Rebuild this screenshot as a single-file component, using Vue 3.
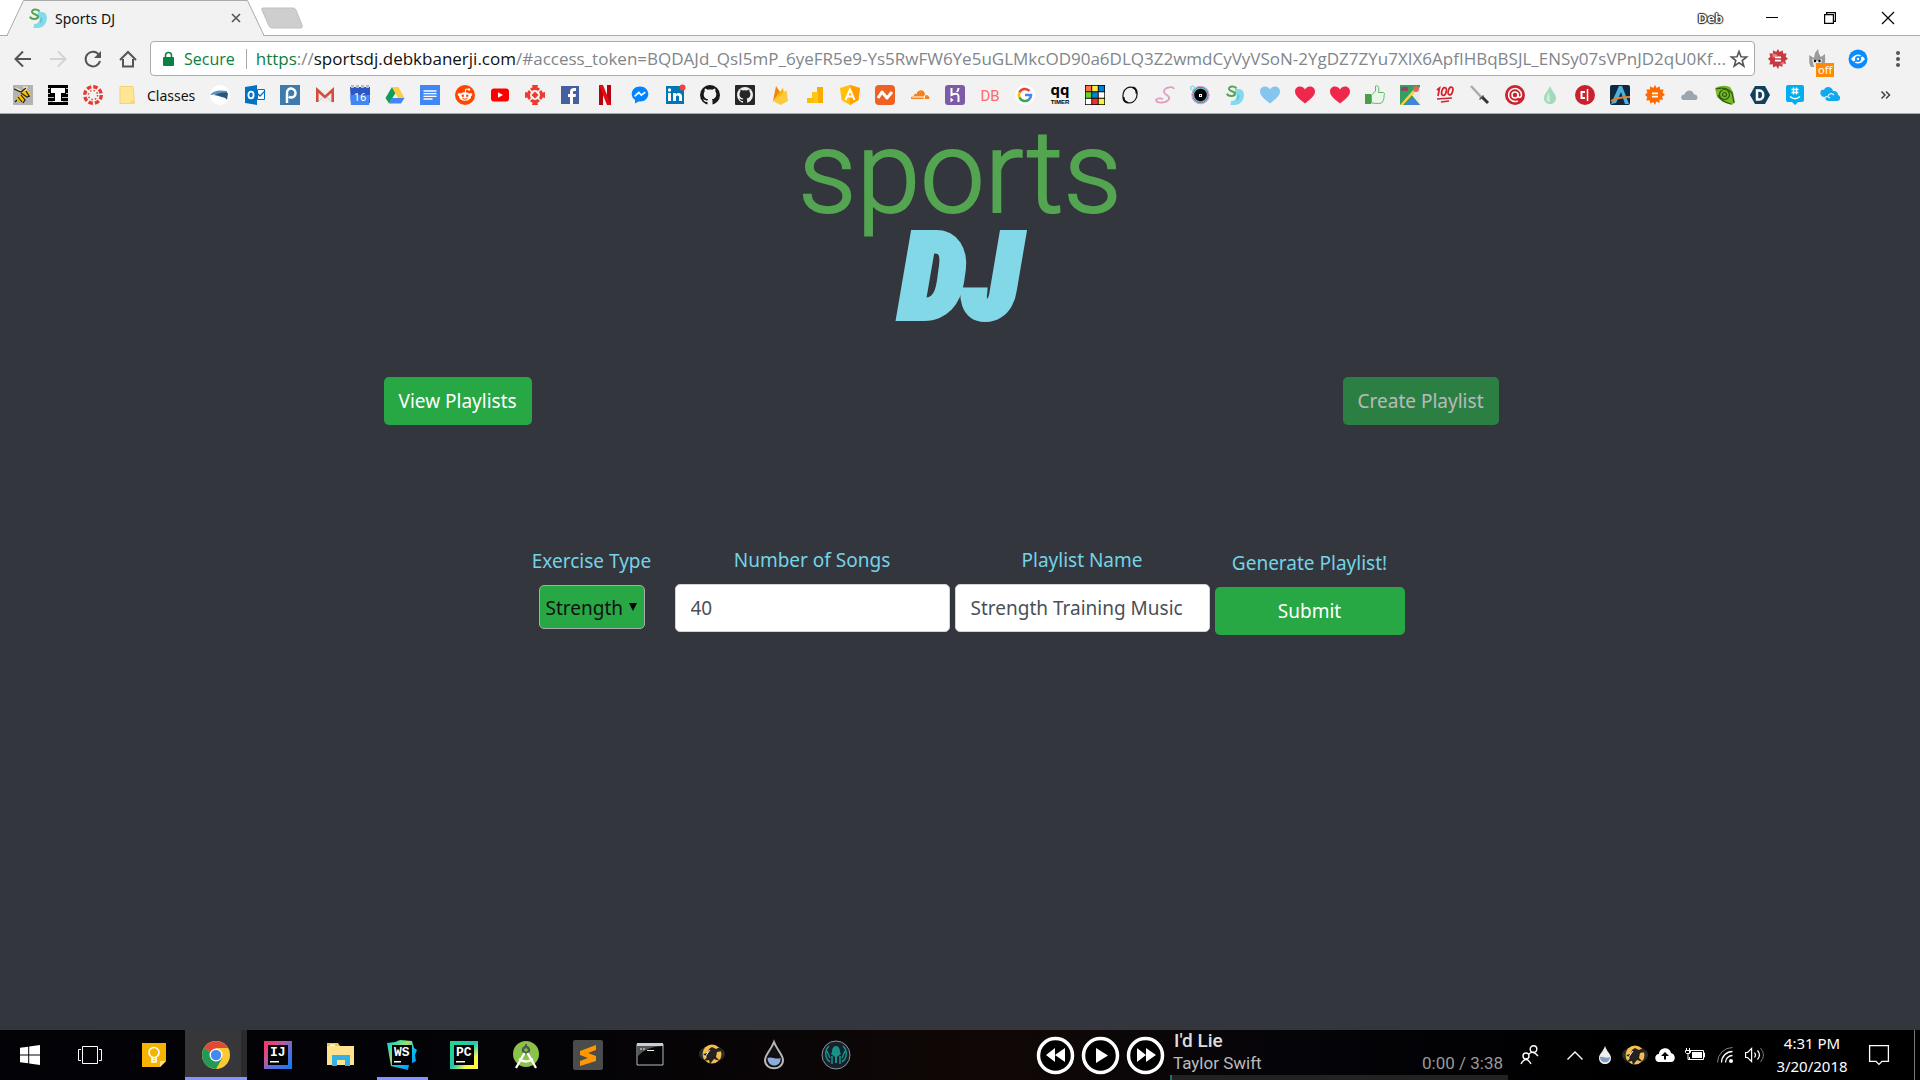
<script setup>
import { ref } from 'vue'

const exercise = ref('Strength')
const songs = ref('40')
const playlist = ref('Strength Training Music')

const heart = (c) => `<path fill="${c}" d="M10 18.500C4 14 0 10.500 0 6.500 0 3.500 2.200 1.500 5 1.500c2 0 4 1 5 3 1-2 3-3 5-3 2.800 0 5 2 5 5 0 4-4 7.500-10 12z"/>`
const gear = (c) => `<path fill="${c}" d="M10 0l1.700 3 3-1.800.4 3.400 3.500-.2-1 3.200 2.400 2.400-2.900 1.500 1 3.300-3.400-.2-.4 3.500-3-1.600L10 20l-1.800-2.900-3 1.500-.5-3.300-3.400.1 1-3.300L0 10l2.400-2.400-1.100-3.200 3.500.2.400-3.400 3 1.800z"/>`
const sd = '<path fill="#83daea" d="M10 4h4c8 0 6 16-4 16H5.500l.6-4c5 1 7.500-7 3.400-8z"/><path fill="#5fc3d6" d="M12.800 9l-1 6.500c2.500-.5 3.500-6 1-6.500z"/><path fill="none" stroke="#54a551" stroke-width="2" d="M11.500 3.500C10 .6 3.500 1 4 4s6.500 2.200 6 5-7 2.500-8-.4"/>'

const site = [
  { name: 'Georgia Tech', art: '<path fill="#b3b3b3" d="M0 0h20v20H0z"/><path fill="#f4e9bd" d="M10 1l5 1-3 6zM2 2l6 3 1 4z"/><ellipse cx="13" cy="9" rx="4.500" ry="3.500" fill="#f2c400"/><ellipse cx="7.500" cy="14" rx="4" ry="3" fill="#f2c400"/><path stroke="#241f12" stroke-width="1.200" fill="none" d="M1 4l7 3 5-4M8 8l6 4 3-1M5 12l4 5M8 10l4 5-2 3M13 6l3 5M4 15l-2 2"/>' },
  { name: 'T-Square', art: '<path d="M0 0h20v20H0z"/><path stroke="#bbb" d="M0 3.500h20M0 8.500h20M0 12.500h20M0 16.500h20"/><path d="M2 2h16v7h-4v9H6V9H2z"/><path fill="#fff" d="M3 3h14v5h-4v8h2v1H5v-1h2V8H3z"/>' },
  { name: 'Canvas', art: '<circle cx="10" cy="10" r="8.300" fill="none" stroke="#e43d30" stroke-width="3.400" stroke-dasharray="4.500 2.020"/><circle cx="10" cy="10" r="4.600" fill="none" stroke="#e43d30" stroke-width="1.500" stroke-dasharray="1.500 2.110"/>' },
]

const bookmarks = [
  { name: 'Registration', art: '<circle cx="10" cy="10" r="10" fill="#fff"/><path fill="#5b93bd" d="M0 10c4-5 10-5 17-4v4c-5-1-11-1-17 0z"/><path fill="#29577b" d="M4 10c5-2 9-3 14-2l-1 7c-2-4-7-2-8-4z"/>' },
  { name: 'Outlook', art: '<path fill="#0072c6" d="M0 2l12-2v20L0 18z"/><path fill="#fff" stroke="#0072c6" d="M12.500 4.500h7v10h-7z"/><path fill="none" stroke="#0072c6" stroke-width="1.300" d="M12 8l3 3 5-5"/><ellipse cx="6" cy="10" rx="2.600" ry="3.300" fill="none" stroke="#fff" stroke-width="1.800"/>' },
  { name: 'Piazza', art: '<path fill="#3e7aab" d="M0 0h20v20H0z"/><path fill="none" stroke="#fff" stroke-width="2.500" d="M7 18V8c0-7 9-5 8.500.5-.5 4.500-5 4.500-6.500 3"/>' },
  { name: 'Gmail', art: '<path fill="#eee" d="M1 4h18v13H1z"/><path fill="none" stroke="#ccc" d="M4 16l6-6 6 6"/><path fill="none" stroke="#d54b3d" stroke-width="2.600" d="M2.300 17V5l7.700 7 7.700-7v12"/>' },
  { name: 'Calendar', art: '<path fill="#2a56c6" d="M0 2h20v16H1z"/><path fill="#4285f4" d="M0 10h20l-1 10H1z"/><path stroke="#bbb" stroke-width="3" stroke-dasharray="3 2" d="M1 1.500h18"/><text x="10" y="15.500" font-size="11" text-anchor="middle" fill="#fff" font-family="Roboto">16</text>' },
  { name: 'Drive', art: '<path fill="#109d58" d="M7 2l3.500 6L4 18.500.5 13z"/><path fill="#ffcd40" d="M7 2h6.500l6 11H13z"/><path fill="#4285f4" d="M7 13h12.500L16 18.500H4z"/>' },
  { name: 'Docs', art: '<path fill="#4285f4" d="M0 0h20v20H0z"/><path stroke="#fff" stroke-width="1.300" d="M3.500 6h13M3.500 8.700h13M3.500 11.300h13M3.500 14h9"/>' },
  { name: 'Reddit', art: '<circle cx="10" cy="10" r="10" fill="#ff4500"/><ellipse cx="10" cy="11.500" rx="6" ry="4.300" fill="#fff"/><circle cx="4.300" cy="9.500" r="1.500" fill="#fff"/><circle cx="15.700" cy="9.500" r="1.500" fill="#fff"/><circle cx="14" cy="4.500" r="1.200" fill="#fff"/><path fill="none" stroke="#fff" d="M10 8l.8-4 3 .6"/><circle cx="7.800" cy="10.800" r="1.200" fill="#ff4500"/><circle cx="12.200" cy="10.800" r="1.200" fill="#ff4500"/><path fill="none" stroke="#ff4500" d="M7.500 13.500q2.500 1.500 5 0"/>' },
  { name: 'YouTube', art: '<rect x="1" y="3.500" width="18" height="13" rx="3" fill="red"/><path fill="#fff" d="M8 7.200v5.600l5-2.800z"/>' },
  { name: 'Target', art: '<circle cx="10" cy="10" r="6.500" fill="none" stroke="#ee3a32" stroke-width="3"/><path stroke="#f2f2f2" stroke-width="1.500" d="M3 3l14 14M17 3L3 17"/><path fill="#ee3a32" d="M7 0h6l-1 4H8zM7 20h6l-1-4H8zM0 7v6l4-1V8zM20 7v6l-4-1V8zM10 6.500l3.500 3.500-3.500 3.500L6.500 10z"/>' },
  { name: 'Facebook', art: '<path fill="#4460a0" d="M1 1h18v18H1z"/><path fill="#fff" d="M10 19v-7H8V9h2V7c0-3 1.500-4 4-4h2v3h-1.500C13.200 6 13 6.500 13 7.500V9h3l-.4 3H13v7z"/>' },
  { name: 'Netflix', art: '<path fill="#b1060f" d="M4 0h4v20H4zM12 0h4v20h-4z"/><path fill="#e50914" d="M4 0h4l8 20h-4z"/>' },
  { name: 'Messenger', art: '<path fill="#0084ff" d="M10 1.500c5 0 8.300 3.500 8.300 7.500S15 16.500 10 16.500l-1.500-.1L5 18.500v-3.500C3 13.500 1.700 11.500 1.700 9 1.700 5 5 1.500 10 1.500z"/><path fill="none" stroke="#fff" stroke-width="1.700" d="M4.500 11.300L8.800 7.500l2.500 2.600 4-3"/>' },
  { name: 'LinkedIn', art: '<path fill="#0077b5" d="M1 1h18v18H1z"/><path fill="#fff" d="M3 8h3v8H3zM8 8h3v1.300c2-2.500 6-1.500 6 2.200V16h-3v-4c0-2-3-2-3 0v4H8z"/><circle cx="4.500" cy="5" r="1.700" fill="#fff"/><circle cx="17.500" cy="2.500" r="3" fill="#f5413f"/>' },
  { name: 'GitHub', art: '<circle cx="10" cy="10" r="10" fill="#191717"/><path fill="#f2f2f2" d="M7.500 20v-3c-3 .5-3-1.500-4.500-2.300 2-.5 2.500 1.500 4.500.8l.6-1.300C5 13.700 3.700 12 3.700 9.200c0-1.200.4-2 1-2.800-.3-1-.2-2 .2-2.900 1.200.1 2 .6 2.800 1.200 1.500-.4 3.100-.4 4.600 0 .8-.6 1.600-1.100 2.800-1.200.4.900.5 1.900.2 2.900.6.800 1 1.600 1 2.800 0 2.800-1.400 4.500-4.400 5 .5.500.6 1 .6 2V20z"/>' },
  { name: 'GitHub Gist', art: '<rect width="20" height="20" rx="1" fill="#272727"/><circle cx="10" cy="10" r="8" fill="#eee"/><path fill="#272727" d="M8 19v-3c-3 .4-2.800-2-4-2.500 1.500 0 2.500 1.500 4 .8l.3-.9C5.500 13 4.500 11.500 4.500 9.200c0-1 .3-1.700.8-2.300L5.500 4.500l2.400 1q2-.5 4 0l2.400-1 .3 2.400c.5.6.8 1.300.8 2.300 0 2.300-1 3.800-3.800 4.200.4.400.5 1 .5 1.700V19z"/>' },
  { name: 'Firebase', art: '<path fill="#f6820c" d="M3 16L6 1l4 6z"/><path fill="#fbb300" d="M3 16L13 3l2.500 13z"/><path fill="#fcca3f" d="M3 16L16.500 5l1.500 11-7.500 4z"/>' },
  { name: 'Analytics', art: '<path fill="#f9ab00" d="M12 2h6v16h-6z"/><path fill="#ffc517" d="M7 7h6v11H7z"/><path fill="#fbbc05" d="M2 13h6v5H2z"/>' },
  { name: 'AngularJS', art: '<path fill="#ffc107" d="M10 0l10 3-1.500 12L10 20l-8.500-5L0 3z"/><path fill="#ffa000" d="M10 0l10 3-1.500 12L10 20z"/><path fill="none" stroke="#fff" stroke-width="2" d="M5.500 15L10 4.500 14.500 15M7.500 11.500h5"/>' },
  { name: 'Namecheap', art: '<rect width="20" height="20" rx="4" fill="#ee6123"/><path fill="none" stroke="#fff" stroke-width="3" stroke-linejoin="round" d="M3 13l4-6 5 6 5-6"/>' },
  { name: 'Cloudflare', art: '<path fill="#f58220" d="M1 14c0-3 2-3.500 3-3 0-2 1-2.500 2.500-2C8 4 15 4 15 10c3-.5 4.500 1.500 4.500 4z"/><path stroke="#fff" d="M2 12h12M15 10l-1 4"/>' },
  { name: 'Heroku', art: '<rect width="20" height="20" rx="3" fill="#7d5ba6"/><path fill="none" stroke="#fff" stroke-width="2" d="M6.500 3v7c4-2 7-1.500 7 1.500V17M13.500 3q0 2-1.500 4"/><path fill="#fff" d="M5.500 12.500l3 2.500-3 2.500z"/>' },
  { name: 'Database', art: '<text x="10" y="16" font-size="15" text-anchor="middle" fill="#ff6b6b" font-family="Roboto">DB</text>' },
  { name: 'Google', art: '<circle cx="10" cy="10" r="10" fill="#fff"/><path fill="none" stroke="#ea4335" stroke-width="2.600" d="M14.500 6A6 6 0 0 0 4.500 7.500"/><path fill="none" stroke="#fbbc05" stroke-width="2.600" d="M4.600 7.300a6 6 0 0 0 0 5.400"/><path fill="none" stroke="#34a853" stroke-width="2.600" d="M4.500 12.500A6 6 0 0 0 14 14.500"/><path fill="none" stroke="#4285f4" stroke-width="2.600" d="M13.800 14.600A6 6 0 0 0 16 10h-6"/>' },
  { name: 'qq timer', art: '<text x="10" y="10" font-size="15" font-weight="700" text-anchor="middle" font-family="Open Sans">qq</text><text x="10" y="19" font-size="6" font-weight="700" text-anchor="middle" font-family="Liberation Sans">TIMER</text>' },
  { name: 'Cube timer', art: '<path d="M0 0h20v20H0z"/><path fill="#ff7043" d="M.7.700h5.600v5.600H.7z"/><path fill="#ffeb3b" d="M7.200.700h5.600v5.600H7.200zM13.700 13.700h5.600v5.600h-5.600z"/><path fill="#0080d0" d="M13.700.700h5.600v5.600h-5.600zM7.200 7.200h5.600v5.600H7.200z"/><path fill="#64d42a" d="M.7 7.200h5.600v5.600H.7z"/><path fill="#fff" d="M13.700 7.200h5.600v5.600h-5.600zM.7 13.700h5.600v5.600H.7z"/><path fill="#e3342f" d="M7.200 13.700h5.600v5.600H7.200z"/>' },
  { name: 'O', art: '<ellipse cx="10" cy="10" rx="7" ry="8" transform="rotate(18 10 10)" fill="none" stroke="#111" stroke-width="1.200"/><path stroke="#111" stroke-width="2" fill="none" d="M3.500 12q0 5 4 5.500M13 2.500q4 1.500 3.500 6"/>' },
  { name: 'S', art: '<path fill="none" stroke="#dda0c4" stroke-width="1.800" d="M19 4c-1-3-9-2-10 2s7 4 5 8-12 5-13 1c1-2 5-2 7-1"/>' },
  { name: 'Record', art: '<circle cx="10.500" cy="10" r="8.500" fill="#000" stroke="#d9a0c9" stroke-width="1.500"/><circle cx="10.500" cy="10" r="7" fill="none" stroke="#5db8cc" stroke-width="1.500"/><path fill="#fff" d="M9 9h3v3H9z"/><path d="M10 10h1v1h-1z"/><circle cx="2.500" cy="3" r="2" fill="none" stroke="#5fd0e0"/>' },
  { name: 'Sports DJ', art: sd },
  { name: 'Blue heart', art: heart('#85c5ee') },
  { name: 'Red heart', art: heart('#f0274c') },
  { name: 'Red heart two', art: heart('#f0274c') },
  { name: 'Thumbs up', art: '<path fill="#46a049" d="M0 9h6v10H0z"/><path fill="#e8f7ea" stroke="#60b866" d="M6.500 10l4-4V1c3-1 4 1 3 6.500h5c1.500 1 1 2 .5 3 .5 3-1 5-1.500 6.500-1 2-6 1.500-11 1z"/>' },
  { name: 'Maps', art: '<path fill="#33a05f" d="M0 0h20v20H0z"/><path fill="#9b416e" d="M1 2h7v4H1z"/><path fill="#e8e8e8" d="M11 9l9-7v18z"/><path fill="#ffce43" d="M0 20L14 4l2 2L3 20z"/><path fill="#4285d8" d="M5 20l7-8 8 8z"/><circle cx="16" cy="4" r="3" fill="#d66a5b"/>' },
  { name: 'Hundred', art: '<g fill="none" stroke="#d12430" stroke-width="1.700"><path d="M2 5l2.500-2L3 11"/><ellipse cx="9" cy="6.500" rx="2.200" ry="4" transform="rotate(15 9 6.500)"/><ellipse cx="15.500" cy="6" rx="2.200" ry="4" transform="rotate(15 15.500 6)"/><path d="M2 14l15-1M6 17l8-1"/></g>' },
  { name: 'Sword', art: '<path stroke="#aaa" stroke-width="2.500" d="M1 1l11 12"/><path stroke="#333" stroke-width="3" d="M12 12l6 6"/><path stroke="#555" stroke-width="1.500" d="M9.500 14.500l4-4"/>' },
  { name: 'At', art: '<circle cx="10" cy="10" r="10" fill="#c9242d"/><circle cx="10" cy="10" r="3" fill="none" stroke="#fff" stroke-width="1.500"/><path fill="none" stroke="#fff" stroke-width="1.500" d="M13 8v3.500c2 2 3.500 0 3.500-1.500A6.500 6.500 0 1 0 13 15.800"/>' },
  { name: 'Droplet', art: '<path fill="#a3d9bd" d="M10 1c2 5 6 8 6 12 0 8-12 8-12 0 0-4 4-7 6-12z"/><path fill="#ccefdc" d="M9 7c-2 4-3 6-2 9 1 1 3 1 3 0z"/>' },
  { name: 'Course critique', art: '<circle cx="10" cy="10" r="10" fill="#cb202d"/><path fill="none" stroke="#fff" stroke-width="2" d="M10 7H6.500v6H10"/><path stroke="#fff" stroke-width="1.500" d="M12.500 4v12"/>' },
  { name: 'Ascend', art: '<rect width="20" height="20" rx="2" fill="#0d2940"/><path fill="#4eb1dd" d="M1 19L9 1h3l7 18h-4L11 7 6 18z"/><path fill="none" stroke="#f27c22" stroke-width="2" d="M1 16c5-3 10-4 19-4"/>' },
  { name: 'Expressions', art: gear('#ff6b00') + '<path stroke="#fff" stroke-width="1.700" d="M7 8.300h6M7 11.700h6"/>' },
  { name: 'Cloud', art: '<path fill="#9ba7af" d="M3 15c-3-1-2-6 1.500-5.500C6 4 13 4 14 9.500c4-.5 4.500 4.500 2 5.500z"/>' },
  { name: 'Knot', art: '<path fill="#76b82a" d="M0 3q8-4 15-1l3 5 2 10-3 3-9-3-6-5z"/><g fill="none" stroke="#2f5c0c" stroke-width="1.200"><circle cx="9.500" cy="9.500" r="5"/><circle cx="9.500" cy="9.500" r="2"/><path d="M1 4q10-3 16 4l2 10M3 10q2 6 13 9"/></g>' },
  { name: 'Dashlane', art: '<path fill="#11415a" d="M5 1h10l5 9-5 9H5L0 10z"/><path fill="none" stroke="#fff" stroke-width="2.500" d="M7 5.500h2.500c5 0 5 9 0 9H7z"/>' },
  { name: 'GroupMe', art: '<path fill="#00aff0" d="M3 0h14q2 0 2 2v13q0 2-2 2h-4l-3 3-3-3H3q-2 0-2-2V2q0-2 2-2z"/><path fill="none" stroke="#fff" stroke-width="1.300" d="M8.500 2.500v7M11.500 2.500v7M6.500 4.500h7M6.500 7.500h7M5 11.500q5 4.500 10 0"/>' },
  { name: 'OneCloud', art: '<path fill="#12a8f0" d="M1 10c-2-4 1-6 3-5 1-4 8-4 9 1 4 0 5 2 5 4 3 1 3 6-1 6H9c-4 0-4-3-3-4-2 0-4 0-5-2z"/><path fill="none" stroke="#f2f2f2" stroke-width="1.200" d="M5 12q3-1 5 1M8 11q2-4 6-1"/>' },
]

const hippo = '<ellipse cx="15" cy="14" rx="13" ry="8" fill="#2b2b2c"/><circle cx="15" cy="14" r="9.500" fill="#f5bd4f"/><path fill="#25221f" d="M12 9l3-2 4 2 4-2 2 4-5 1-1 5 4 4-6-2-4 5-1-4-5 1 3-4-4-3 5-1z"/><path stroke="#eee" d="M8 17l5-7"/>'
const jb = (g, t) => `<path fill="url(#${g})" d="M1 1h28v28H1z"/><path d="M5 5h20v20H5z"/><text x="7" y="16" font-size="13" font-weight="700" fill="#fff" font-family="Liberation Mono, monospace">${t}</text><path fill="#fff" d="M7 21h9v1.500H7z"/>`
const apps = [
  { name: 'Google Keep', art: '<path fill="#f4b400" d="M3 3h24v18l-6 6H3z"/><path fill="#fde293" d="M27 21l-6 6v-6z"/><circle cx="15" cy="12.500" r="5" fill="none" stroke="#fff" stroke-width="1.600"/><path fill="none" stroke="#fff" stroke-width="1.600" d="M13 17v5h4v-5M13 19.500h4"/>' },
  { name: 'Google Chrome', state: 'active', art: '<circle cx="15" cy="15" r="14" fill="#fcc934"/><path fill="#e2483a" d="M15 15L2.900 8A14 14 0 0 1 27.100 8H15z"/><path fill="#229a57" d="M15 15L2.900 8A14 14 0 0 0 15 29l6-10.500z"/><circle cx="15" cy="15" r="6.500" fill="#fff"/><circle cx="15" cy="15" r="5.200" fill="#4688f1"/>' },
  { name: 'IntelliJ IDEA', art: jb('gij', 'IJ') },
  { name: 'File Explorer', art: '<path fill="#f6c544" d="M2 3h11l2 3v4H2z"/><path fill="#ffe28d" d="M2 6h27v19H2z"/><path fill="#fff" d="M5 4.500h5v1.500H5z"/><path fill="#33b1e4" d="M7 15h18v11h-5v-6h-8v6H7z"/>' },
  { name: 'WebStorm', state: 'open', art: '<path fill="url(#gws)" d="M0 3l8-1 5-2 12 1 2 7 3 2-2 5 1 6-7 4-1 5-17-4z"/><path d="M5 5h20v20H5z"/><text x="7" y="16" font-size="13" font-weight="700" fill="#fff" font-family="Liberation Mono, monospace">WS</text><path fill="#fff" d="M7 21h7v1.500H7z"/>' },
  { name: 'PyCharm', art: jb('gpc', 'PC') },
  { name: 'Android Studio', art: '<circle cx="15" cy="14" r="13" fill="#8bc34a"/><circle cx="15" cy="10" r="3" fill="none" stroke="#4e5b50" stroke-width="2.500"/><path stroke="#4e5b50" stroke-width="2" d="M15 4v3"/><path fill="none" stroke="#fff" stroke-width="2.300" d="M13.500 13L5 28M16.500 13L25 28M8 19q7 5 14 0"/>' },
  { name: 'Sublime Text', art: '<rect width="30" height="30" rx="2" fill="#4b4b4b"/><path fill="#ff9800" d="M7 11l16-6v5l-8 3 8 3v5L7 26v-5l8-3-8-3z"/>' },
  { name: 'Command Prompt', art: '<path fill="#050505" stroke="#b1bcc4" d="M2 4h26v21H2z"/><path fill="#c3d0d9" d="M2 3h26v3H2z"/><path fill="#555" d="M3 6h24q-16 1-24 10z"/><path stroke="#eee" stroke-dasharray="2 1" d="M5 9h6"/><path stroke="#eee" d="M12 10.500h7"/>' },
  { name: 'Hippo', art: hippo },
  { name: 'Rainmeter', art: '<path fill="#111" stroke="#b8b8b8" stroke-width="2" d="M15 2c3 8 9 13 9 18 0 11-18 11-18 0 0-5 6-10 9-18z"/><path fill="#8eacd9" d="M8.500 18c4-2 8 2 13 0 1 10-13 10-13 0z"/>' },
  { name: 'GitKraken', art: '<circle cx="15" cy="15" r="14" fill="#17202c" stroke="#8b949a"/><path fill="#179287" d="M11 12c0-8 8-8 8 0l1 2-4 3v6h-2v-6l-4-3z"/><path fill="none" stroke="#179287" stroke-width="1.500" d="M8 6C3 11 4 18 9 22M22 6c5 5 4 12-1 16M11 16v8M19 16v8M6 11l3 7M24 11l-3 7"/>' },
]

const media = [
  { name: 'Previous', d: 'M19 12v14l-9-7zM29 12v14l-10-7z' },
  { name: 'Play', d: 'M15 12v15l12-7.500z' },
  { name: 'Next', d: 'M11 12v14l9-7zM20 12v14l10-7z' },
]
</script>

<template>
  <div class="screen">
    <header class="chrome">
      <div class="tabstrip">
        <div class="tab">
          <svg class="tab-shape" width="264" height="36" viewBox="0 0 264 36"><path fill="#f2f2f2" stroke="#aaa" d="M7 35.500L23.500.5h224L264 35.500" /><path stroke="#f2f2f2" d="M8 35.500h255" /></svg>
          <svg class="favicon" width="20" height="20" viewBox="0 0 20 20" v-html="sd" />
          <span class="tab-title">Sports DJ</span>
          <button class="plain" aria-label="Close tab"><svg width="10" height="10" viewBox="0 0 10 10"><path stroke="#555" stroke-width="1.600" d="M1 1l8 8M9 1L1 9" /></svg></button>
        </div>
        <button class="plain new-tab" aria-label="New tab"><svg width="44" height="22" viewBox="0 0 44 22"><path fill="#cecece" stroke="#bfbfbf" d="M3 1h30q2 0 3 2l6 15q1 3-1 3H12q-2 0-3-2L2 3q-1-2 1-2z" /></svg></button>
        <span class="profile">Deb</span>
        <div class="window-buttons">
          <button class="plain" aria-label="Minimize"><svg width="12" height="12" viewBox="0 0 12 12"><path stroke="#000" d="M0 5.500h12" /></svg></button>
          <button class="plain" aria-label="Restore"><svg width="12" height="12" viewBox="0 0 12 12"><path fill="none" stroke="#000" stroke-width="1.200" d="M.6 2.600h8.800v8.800H.6zM2.600 2V.6h8.800v8.800H10" /></svg></button>
          <button class="plain" aria-label="Close"><svg width="12" height="12" viewBox="0 0 12 12"><path stroke="#000" stroke-width="1.200" d="M0 0l12 12M12 0L0 12" /></svg></button>
        </div>
      </div>

      <div class="toolbar">
        <button class="plain nav" aria-label="Back"><svg width="18" height="18" viewBox="0 0 18 18"><path fill="none" stroke="#555" stroke-width="2" d="M17 9H2M9 1.500L1.500 9 9 16.500" /></svg></button>
        <button class="plain nav" aria-label="Forward" disabled><svg width="18" height="18" viewBox="0 0 18 18"><path fill="none" stroke="#d3d3d3" stroke-width="2" d="M1 9h15M9 1.500L16.500 9 9 16.500" /></svg></button>
        <button class="plain nav" aria-label="Reload"><svg width="18" height="18" viewBox="0 0 18 18"><path fill="none" stroke="#555" stroke-width="2" d="M15 5A7.300 7.300 0 1 0 16 11" /><path fill="#555" d="M17 1v7h-7z" /></svg></button>
        <button class="plain nav" aria-label="Home"><svg width="18" height="18" viewBox="0 0 18 18"><path fill="none" stroke="#555" stroke-width="2" d="M1 10L9 2l8 8M4 9v7.500h10V9" /></svg></button>
        <div class="address">
          <svg width="11" height="14" viewBox="0 0 11 14"><path fill="#0b8043" d="M1 5h9q1 0 1 1v7q0 1-1 1H1q-1 0-1-1V6q0-1 1-1z" /><path fill="none" stroke="#0b8043" stroke-width="1.500" d="M2.500 6V3.500a3 3 0 0 1 6 0V6" /></svg>
          <span class="secure">Secure</span>
          <span class="url"><span class="scheme">https</span>://<span class="host">sportsdj.debkbanerji.com</span>/#access_token=BQDAJd_QsI5mP_6yeFR5e9-Ys5RwFW6Ye5uGLMkcOD90a6DLQ3Z2wmdCyVyVSoN-2YgDZ7ZYu7XIX6ApfIHBqBSJL_ENSy07sVPnJD2qU0Kf...</span>
          <button class="plain" aria-label="Bookmark this page"><svg width="18" height="18" viewBox="0 0 18 18"><path fill="none" stroke="#555" stroke-width="1.600" d="M9 1.500l2 5.300 5.600.2-4.400 3.500 1.600 5.500L9 12.800 4.200 16l1.600-5.500L1.400 7l5.600-.2z" /></svg></button>
        </div>
        <button class="plain ext" aria-label="Extension"><svg width="20" height="20" viewBox="0 0 20 20"><path fill="#c53a42" d="M10 0l1.700 3 3-1.800.4 3.400 3.500-.2-1 3.200 2.400 2.400-2.900 1.500 1 3.300-3.400-.2-.4 3.500-3-1.600L10 20l-1.800-2.900-3 1.500-.5-3.300-3.400.1 1-3.300L0 10l2.400-2.400-1.100-3.200 3.500.2.400-3.400 3 1.800z" /><path fill="#e8808a" d="M4 4l6 2-5 3zM12 15l4-3-1 4z" /><path stroke="#fff" stroke-width="1.800" d="M7 8.300h6M7 11.700h6" /></svg></button>
        <button class="plain ext off" aria-label="Extension off">
          <svg width="20" height="20" viewBox="0 0 20 20"><path fill="#9a9a9a" d="M3 18C0 13 2 11 1 6l5 3 1-5 3-4 1 5 2 3 4-3c0 5 1 9-2 13z" /><path fill="#e6e6e6" d="M4 10l5 2 5-2-1 8H6z" /><circle cx="7" cy="12" r="1.200" /><circle cx="11.500" cy="12" r="1.200" /></svg>
          <span class="badge">off</span>
        </button>
        <button class="plain ext" aria-label="Privacy extension"><svg width="20" height="20" viewBox="0 0 20 20"><circle cx="10" cy="10" r="9.500" fill="#0a8cff" /><path fill="#fff" d="M3 10q7-9 14 0-7 9-14 0z" /><circle cx="10" cy="10" r="3" fill="#0a8cff" /><path stroke="#0a8cff" stroke-width="1.500" d="M5 14l10-8" /><circle cx="10" cy="10" r="1.200" fill="#fff" /></svg></button>
        <button class="plain ext" aria-label="Menu"><svg width="4" height="16" viewBox="0 0 4 16"><g fill="#555"><circle cx="2" cy="2" r="2" /><circle cx="2" cy="8" r="2" /><circle cx="2" cy="14" r="2" /></g></svg></button>
      </div>

      <nav class="bookmarks" aria-label="Bookmarks">
        <a v-for="b in site" :key="b.name" href="#" :aria-label="b.name"><svg width="20" height="20" viewBox="0 0 20 20" v-html="b.art" /></a>
        <a href="#" class="folder"><svg width="20" height="20" viewBox="0 0 20 20"><path fill="#ffe694" stroke="#f0d27a" d="M2 1.500h13l1 10v7H2z" /><path fill="#fbd872" d="M12 19v-3q4-2 5 1v2z" /></svg>Classes</a>
        <a v-for="b in bookmarks" :key="b.name" href="#" :aria-label="b.name"><svg width="20" height="20" viewBox="0 0 20 20" v-html="b.art" /></a>
        <button class="plain more" aria-label="More bookmarks"><svg width="9" height="8" viewBox="0 0 9 8"><path fill="none" stroke="#444" stroke-width="1.500" d="M.5.5L4 4 .5 7.500M5 .5L8.500 4 5 7.500" /></svg></button>
      </nav>
    </header>

    <main class="page">
      <h1 class="logo">
        <svg width="336" height="216" viewBox="0 0 336 216">
          <text class="logo-sports" x="168" y="98" text-anchor="middle">sports</text>
          <text class="logo-dj" x="168" y="203" text-anchor="middle">DJ</text>
        </svg>
      </h1>

      <div class="views">
        <button class="btn">View Playlists</button>
        <button class="btn" disabled>Create Playlist</button>
      </div>

      <form class="generator" @submit.prevent>
        <div class="field exercise">
          <label for="exercise">Exercise Type</label>
          <div class="select-wrap">
            <select id="exercise" v-model="exercise"><option>Strength</option><option>Cardio</option></select>
            <svg class="caret" width="8" height="8" viewBox="0 0 8 8"><path d="M0 0h8L4 8z" /></svg>
          </div>
        </div>
        <div class="field songs">
          <label for="songs">Number of Songs</label>
          <input id="songs" v-model="songs" type="text" inputmode="numeric">
        </div>
        <div class="field name">
          <label for="name">Playlist Name</label>
          <input id="name" v-model="playlist" type="text">
        </div>
        <div class="field submit">
          <label for="submit">Generate Playlist!</label>
          <button id="submit" class="btn" type="submit">Submit</button>
        </div>
      </form>
    </main>

    <footer class="taskbar">
      <svg class="defs" width="0" height="0">
        <linearGradient id="gij" x2="1" y2="1"><stop stop-color="#fe315d" /><stop offset=".35" stop-color="#c8559a" /><stop offset=".6" stop-color="#5a6fd8" /><stop offset="1" stop-color="#087cfa" /></linearGradient>
        <linearGradient id="gws" x2="1" y2="1"><stop stop-color="#00cdd7" /><stop offset=".4" stop-color="#9be26a" /><stop offset=".6" stop-color="#07c3f2" /><stop offset="1" stop-color="#087cfa" /></linearGradient>
        <linearGradient id="gpc" x2="1" y2="1"><stop stop-color="#21d789" /><stop offset=".5" stop-color="#21c7b0" /><stop offset=".75" stop-color="#fcf84a" /><stop offset="1" stop-color="#fcf84a" /></linearGradient>
      </svg>
      <button class="plain system" aria-label="Start"><svg width="20" height="20" viewBox="0 0 20 20"><path fill="#fff" d="M0 2.800L8.200 1.700v7.800H0zM9.200 1.500L20 0v9.500H9.200zM0 10.500h8.200v7.800L0 17.200zM9.200 10.500H20V20L9.200 18.500z" /></svg></button>
      <button class="plain system" aria-label="Task view"><svg width="24" height="18" viewBox="0 0 24 18"><path fill="none" stroke="#fff" d="M4.500.5h15v17h-15zM3 3.500H.5v11H3M21 3.500h2.500v11H21" /></svg></button>
      <div class="apps">
        <button v-for="a in apps" :key="a.name" class="plain app" :class="a.state" :aria-label="a.name"><svg width="30" height="30" viewBox="0 0 30 30" v-html="a.art" /></button>
      </div>
      <section class="player" aria-label="Music player">
        <button v-for="m in media" :key="m.name" class="plain media" :aria-label="m.name"><svg width="39" height="39" viewBox="0 0 39 39"><circle cx="19.500" cy="19.500" r="17" fill="#000" stroke="#fff" stroke-width="3.500" /><path fill="#fff" :d="m.d" /></svg></button>
        <div class="track">
          <div class="song">I'd Lie</div>
          <div class="artist"><span>Taylor Swift</span><span class="time">0:00 / 3:38</span></div>
          <div class="progress"></div>
        </div>
      </section>
      <div class="tray">
        <button class="plain people" aria-label="People"><svg width="20" height="20" viewBox="0 0 20 20"><g fill="none" stroke="#fff" stroke-width="1.400"><circle cx="13.500" cy="4" r="3.300" /><circle cx="6" cy="11" r="3" /><path d="M9 9q4-4 9 2M1 19q5-9 10 0" /></g></svg></button>
        <button class="plain" aria-label="Show hidden icons"><svg width="16" height="9" viewBox="0 0 16 9"><path fill="none" stroke="#fff" stroke-width="1.400" d="M.5 8.500L8 1l7.500 7.500" /></svg></button>
        <button class="plain" aria-label="Rainmeter"><svg width="14" height="20" viewBox="0 0 14 20"><path fill="#eee" d="M7 1c2 6 6 8 6 12 0 8-12 8-12 0 0-4 4-6 6-12z" /><path fill="#7d9cc8" d="M2 12c3-1 6 2 10 0 0 7-10 7-10 0z" /></svg></button>
        <button class="plain" aria-label="Hippo"><svg width="20" height="20" viewBox="5 4 20 20" v-html="hippo" /></button>
        <button class="plain" aria-label="Cloud sync"><svg width="20" height="14" viewBox="0 0 20 14"><path fill="#fff" d="M4 14C-1 14-1 6 4 6c0-7 11-8 12-1 5 1 5 9 0 9z" /><path d="M10 4l4 4h-3v3.500H9V8H6z" /></svg></button>
        <button class="plain" aria-label="Battery"><svg width="20" height="14" viewBox="0 0 20 14"><path fill="none" stroke="#fff" d="M4.500 5.500V2.500h14v9h-14V9M18.500 5h1v4h-1M1.500 0v2M4.500 0v2M.5 2.500h5v2l-1 1h-3l-1-1zM3 6v5.500h2" /><path fill="#fff" d="M7 4h10v6H7z" /></svg></button>
        <button class="plain" aria-label="Network"><svg width="16" height="16" viewBox="0 0 16 16"><g fill="none" stroke="#fff"><path opacity=".5" d="M.5 15.500A15 15 0 0 1 15.500.5" /><path stroke-width="1.300" d="M4.500 15.500a11 11 0 0 1 11-11M8.500 15.500a7 7 0 0 1 7-7" /></g><circle cx="14" cy="14" r="2" fill="#fff" /></svg></button>
        <button class="plain" aria-label="Volume"><svg width="20" height="16" viewBox="0 0 20 16"><path fill="none" stroke="#fff" stroke-width="1.200" d="M.6 5.500h2l4-4v13l-4-4h-2zM9.500 5.500q2 2.500 0 5M12.500 3.500q4 4.500 0 9" /><path fill="none" stroke="#777" d="M15.500 1q6 7 0 14" /></svg></button>
        <div class="clock"><time>4:31 PM</time><time>3/20/2018</time></div>
        <button class="plain notices" aria-label="Notifications"><svg width="20" height="20" viewBox="0 0 20 20"><path fill="none" stroke="#fff" stroke-width="1.300" d="M.6.600h18.800v15.800H13l-3 3-3-3H.6z" /></svg></button>
      </div>
    </footer>
  </div>
</template>

<style>
body { background: #33363d; }
</style>

<style scoped>
.screen {
  display: flex;
  flex-direction: column;
  min-height: 100vh;
  font-family: "Noto Sans", "Open Sans", sans-serif;
}
svg { display: block; flex: none; overflow: visible; }
.plain {
  display: flex;
  align-items: center;
  justify-content: center;
  padding: 0;
  border: 0;
  background: none;
}

.chrome { background: #f2f2f2; border-bottom: 1px solid #aaa; color: #111; }
.tabstrip {
  display: flex;
  align-items: center;
  height: 36px;
  background: linear-gradient(#aaa, #aaa) bottom / 100% 1px no-repeat #fff;
}
.tab {
  position: relative;
  display: flex;
  align-items: center;
  gap: 7px;
  box-sizing: border-box;
  width: 264px;
  height: 36px;
  padding: 0 23px 0 28px;
}
.tab-shape { position: absolute; left: 0; top: 0; }
.favicon, .tab-title, .tab .plain { position: relative; }
.tab-title { flex: 1; font-size: 14px; }
.new-tab { margin-left: -4px; }
.profile {
  margin-left: auto;
  color: #fff;
  font-size: 13px;
  font-weight: 600;
  text-shadow: 1px 0 1px #222, -1px 0 1px #222, 0 1px 1px #222, 0 -1px 1px #222;
}
.window-buttons { display: flex; margin: 0 3px 0 20px; }
.window-buttons .plain { width: 58px; height: 34px; }

.toolbar { display: flex; align-items: center; height: 45px; padding: 0 2px 0 5px; }
.nav { width: 35px; height: 35px; }
.address {
  display: flex;
  align-items: center;
  flex: 1;
  min-width: 0;
  height: 33px;
  margin: 0 3px 0 5px;
  padding: 0 6px 0 12px;
  border: 1px solid #aaa;
  border-radius: 4px;
  background: #fff;
  font-family: "Open Sans", "Noto Sans", sans-serif;
  font-size: 17px;
  color: #80868b;
}
.secure {
  margin-left: 10px;
  margin-right: 9px;
  padding-right: 11px;
  border-right: 1px solid #aaa;
  font-size: 16px;
  line-height: 20px;
}
.secure, .scheme { color: #0b8043; }
.host { color: #111; }
.url { flex: 1; min-width: 0; overflow: hidden; white-space: nowrap; }
.ext { width: 40px; height: 35px; position: relative; }
.off .badge {
  position: absolute;
  left: 18px;
  bottom: -1px;
  padding: 0 2px;
  background: #ff8a00;
  color: #fff;
  font: 11px/14px "Noto Sans", sans-serif;
}

.bookmarks { display: flex; align-items: center; gap: 15px; height: 28px; padding: 0 30px 4px 13px; overflow-x: clip; }
.bookmarks a { flex: none; color: #111; text-decoration: none; }
.bookmarks .folder { display: flex; align-items: center; gap: 9px; width: 77px; font-size: 14px; }
.more { margin-left: auto; }

.page { flex: 1; background: #33363d; }
.logo { display: flex; justify-content: center; margin: 0; }
.logo-sports {
  font: 300 115px Roboto, sans-serif;
  fill: #54a551;
  stroke: #54a551;
  stroke-width: 2px;
}
.logo-dj {
  font: italic 900 116px "Roboto Condensed", Roboto, sans-serif;
  fill: #83d8e8;
  stroke: #83d8e8;
  stroke-width: 8px;
}
.views {
  display: flex;
  justify-content: space-between;
  box-sizing: border-box;
  max-width: 1153px;
  margin: 47px auto 0;
  padding-right: 38px;
}
.btn {
  height: 48px;
  padding: 0 15px;
  border: 0;
  border-radius: 5px;
  background: #28a745;
  color: #fff;
  font: 19px "Noto Sans", "Open Sans", sans-serif;
}
.btn:disabled { opacity: 0.65; }

.generator {
  display: flex;
  justify-content: center;
  gap: 5px;
  margin-top: 121px;
  padding: 0 0 40px 18px;
}
.field { display: flex; flex-direction: column; align-items: center; }
.field label { margin-bottom: 10px; color: #75d3e6; font-size: 19px; line-height: 28px; white-space: nowrap; }
.exercise { width: 116px; margin-right: 20px; padding-top: 1px; }
.songs { width: 275px; }
.name { width: 255px; }
.submit { width: 190px; padding-top: 3px; }
.submit .btn { width: 100%; }
.select-wrap { position: relative; }
select {
  appearance: none;
  width: 106px;
  height: 44px;
  padding: 2px 4px 0 6px;
  border: 1px solid #aaa;
  border-radius: 5px;
  background: #28a745;
  color: #111;
  font: 19px "Noto Sans", "Open Sans", sans-serif;
}
.caret { position: absolute; right: 8px; top: 18px; pointer-events: none; }
input {
  box-sizing: border-box;
  width: 100%;
  height: 48px;
  padding: 0 15px;
  border: 1px solid #ced4da;
  border-radius: 5px;
  background: #fff;
  color: #495057;
  font: 19px "Noto Sans", "Open Sans", sans-serif;
}

.taskbar {
  display: flex;
  align-items: stretch;
  height: 50px;
  background: linear-gradient(90deg, #020207 0, #040306 30%, #100806 52%, #040409 68%, #000 85%);
  color: #fff;
}
.defs { position: absolute; }
.system { width: 60px; }
.apps { display: flex; margin-left: 3px; }
.app { width: 62px; }
.app.active { background: linear-gradient(#8693ff, #8693ff) bottom / 100% 3px no-repeat, linear-gradient(90deg, #37373a 56px, #2b2b2e 56px); }
.app.open { background: linear-gradient(#8693ff, #8693ff) bottom / 51px 3px no-repeat; }
.player { display: flex; align-items: center; margin-left: auto; }
.media { width: 45px; }
.track {
  display: flex;
  flex-direction: column;
  align-self: stretch;
  width: 338px;
  margin-left: 2px;
  font-family: Roboto, sans-serif;
  color: #bbb;
}
.song { padding-left: 4px; font-size: 19px; font-weight: 500; line-height: 22px; color: #ddd; }
.artist { display: flex; justify-content: space-between; padding: 0 5px 0 3px; font-size: 17px; line-height: 23px; }
.time { color: #999; }
.progress { height: 5px; border-left: 2px solid #14756d; background: #222; }
.tray { display: flex; align-items: center; margin-right: 5px; border-right: 1px solid #777; }
.tray .plain { width: 30px; height: 40px; }
.tray .people { margin: 0 15px 0 7px; }
.clock {
  display: flex;
  flex-direction: column;
  align-items: center;
  width: 84px;
  font-size: 15px;
  line-height: 23px;
}
.tray .notices { width: 50px; margin-right: 10px; }
</style>
